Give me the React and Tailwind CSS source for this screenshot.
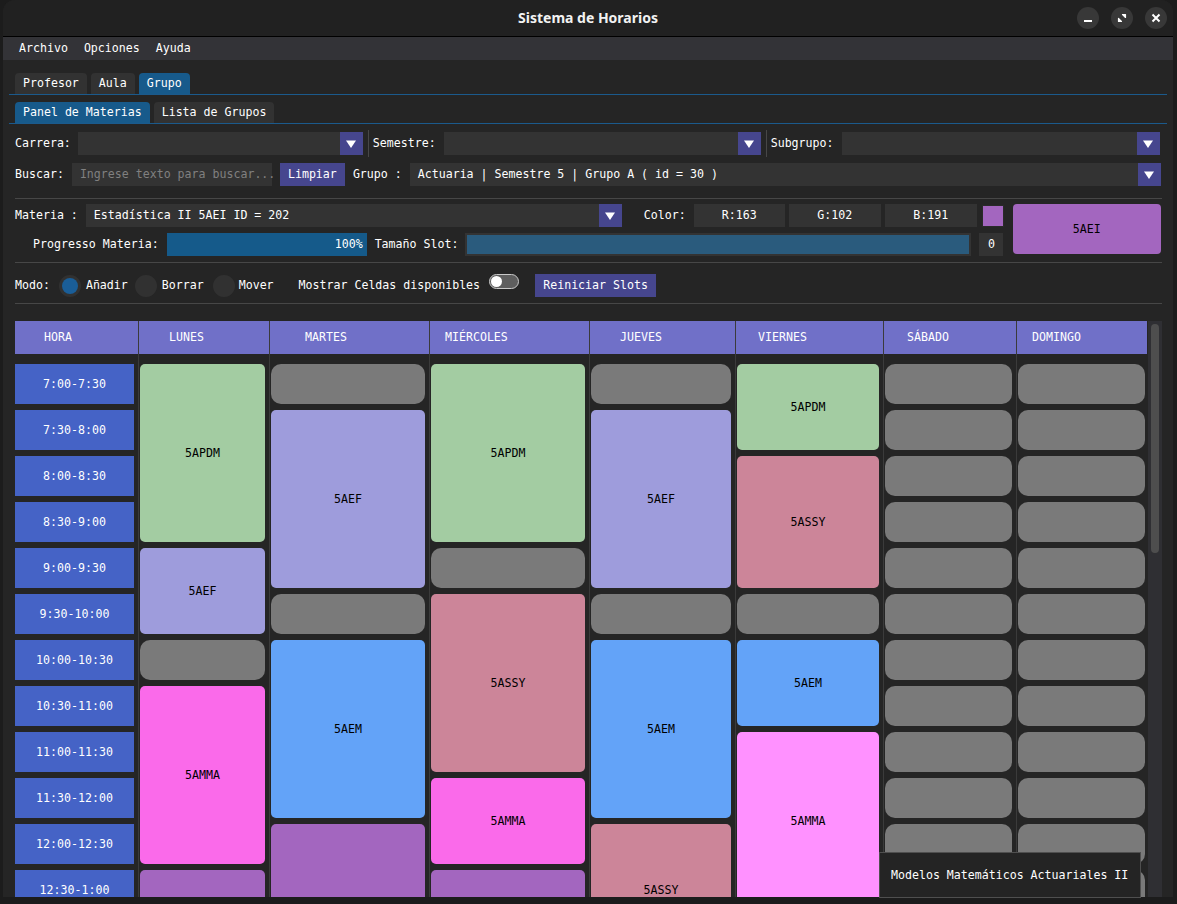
import React from 'react';

const mono = "font-['DejaVu_Sans_Mono',monospace] text-[11.6px] leading-[13px]";

const tint = {
  apdm: 'bg-[#a3cca2]',
  aef: 'bg-[#9e9cdc]',
  aem: 'bg-[#63a3f8]',
  assy: 'bg-[#cc8599]',
  amma: 'bg-[#fa6aea]',
  ammaHover: 'bg-[#ff91ff]',
  mor: 'bg-[#a366bf]',
};

const spanH = { 1: 'h-[40px]', 2: 'h-[86px]', 3: 'h-[132px]', 4: 'h-[178px]' };

const horas = [
  '7:00-7:30', '7:30-8:00', '8:00-8:30', '8:30-9:00', '9:00-9:30', '9:30-10:00',
  '10:00-10:30', '10:30-11:00', '11:00-11:30', '11:30-12:00', '12:00-12:30', '12:30-1:00',
];

const libre = (n) => Array.from({ length: n }, () => [null, 1]);

const dias = [
  { name: 'LUNES', w: 'w-[131px]', pl: 'pl-[30px]', pr: 'pr-[4px]',
    cells: [['5APDM', 4, 'apdm'], ['5AEF', 2, 'aef'], [null, 1], ['5AMMA', 4, 'amma'], ['', 2, 'mor']] },
  { name: 'MARTES', w: 'w-[160px]', pl: 'pl-[35px]', pr: 'pr-[4px]',
    cells: [[null, 1], ['5AEF', 4, 'aef'], [null, 1], ['5AEM', 4, 'aem'], ['', 3, 'mor']] },
  { name: 'MIÉRCOLES', w: 'w-[160px]', pl: 'pl-[15px]', pr: 'pr-[4px]',
    cells: [['5APDM', 4, 'apdm'], [null, 1], ['5ASSY', 4, 'assy'], ['5AMMA', 2, 'amma'], ['', 2, 'mor']] },
  { name: 'JUEVES', w: 'w-[146px]', pl: 'pl-[30px]', pr: 'pr-[4px]',
    cells: [[null, 1], ['5AEF', 4, 'aef'], [null, 1], ['5AEM', 4, 'aem'], ['5ASSY', 3, 'assy']] },
  { name: 'VIERNES', w: 'w-[148px]', pl: 'pl-[22px]', pr: 'pr-[4px]',
    cells: [['5APDM', 2, 'apdm'], ['5ASSY', 3, 'assy'], [null, 1], ['5AEM', 2, 'aem'], ['5AMMA', 4, 'ammaHover']] },
  { name: 'SÁBADO', w: 'w-[133px]', pl: 'pl-[23px]', pr: 'pr-[4px]', cells: libre(12) },
  { name: 'DOMINGO', w: 'w-[131px]', pl: 'pl-[15px]', pr: 'pr-[2px]', cells: libre(12) },
];

function Arrow() {
  return (
    <div className="flex h-full w-[23px] shrink-0 items-center justify-center bg-[#46468e]">
      <svg width="10" height="8" viewBox="0 0 10 8"><path d="M0 0.5h10L5 8z" fill="#fff" /></svg>
    </div>
  );
}

function Combo({ w, text }) {
  return (
    <div className={`flex h-[23px] ${w} shrink-0 bg-[#333333]`}>
      <div className="flex flex-1 items-center px-[8px] whitespace-nowrap">{text}</div>
      <Arrow />
    </div>
  );
}

function Tab({ active, children }) {
  return (
    <div className={`flex h-[21px] items-center rounded-t-[4px] px-[8px] ${active ? 'bg-[#175a8b]' : 'bg-[#323232]'}`}>
      {children}
    </div>
  );
}

function Radio({ on, className }) {
  return (
    <div className={`flex h-[22px] w-[22px] shrink-0 items-center justify-center rounded-full bg-[#313131] ${className}`}>
      {on && <div className="h-[16px] w-[16px] rounded-full bg-[#1a5e98]" />}
    </div>
  );
}

function Cell({ label, span, kind }) {
  if (!kind) return <div className="h-[40px] shrink-0 rounded-[10px] bg-[#7a7a7a]" />;
  return (
    <div className={`flex ${spanH[span]} shrink-0 items-center justify-center rounded-[5px] text-black ${tint[kind]}`}>
      {label}
    </div>
  );
}

function TitleButton({ children }) {
  return (
    <div className="flex h-[22px] w-[22px] items-center justify-center rounded-full bg-[#383838]">
      <svg width="22" height="22" viewBox="0 0 22 22">{children}</svg>
    </div>
  );
}

export default function App() {
  return (
    <div className={`relative h-[904px] w-[1177px] overflow-hidden bg-[#1c1c1c] text-white ${mono}`}>
      <div className="ml-[3px] flex h-[897px] w-[1170px] flex-col overflow-hidden rounded-t-[12px] bg-[#252525]">
        {/* title bar */}
        <div className="grid h-[37px] shrink-0 grid-cols-[1fr_auto_1fr] items-center border-b border-black bg-[#212121]">
          <div />
          <div className="font-['Noto_Sans',sans-serif] text-[14px] font-bold leading-none text-[#f2f2f2]">Sistema de Horarios</div>
          <div className="flex justify-end gap-[12px] pr-[6px]">
            <TitleButton><rect x="7" y="13" width="8" height="2" fill="#fff" /></TitleButton>
            <TitleButton>
              <path d="M11.5 7.5h3v3z M7.5 11.5v3h3z" fill="#fff" stroke="#fff" strokeWidth="1.2" strokeLinejoin="round" />
            </TitleButton>
            <TitleButton><path d="M7.5 7.5l7 7M14.5 7.5l-7 7" stroke="#fff" strokeWidth="2" /></TitleButton>
          </div>
        </div>

        {/* menu */}
        <div className="flex h-[23px] shrink-0 items-center gap-[16px] bg-[#333337] pl-[16px]">
          <span>Archivo</span>
          <span>Opciones</span>
          <span>Ayuda</span>
        </div>

        {/* body */}
        <div className="flex flex-1 flex-col pl-[12px] pr-[11px] pt-[13px]">
          <div className="-ml-[6px] -mr-[5px] flex gap-[4px] border-b border-[#1b5a8c] pl-[6px]">
            <Tab>Profesor</Tab>
            <Tab>Aula</Tab>
            <Tab active>Grupo</Tab>
          </div>
          <div className="-ml-[6px] -mr-[5px] mt-[7px] flex gap-[4px] border-b border-[#1b5a8c] pl-[6px]">
            <Tab active>Panel de Materias</Tab>
            <Tab>Lista de Grupos</Tab>
          </div>

          {/* fila 1 */}
          <div className="mt-[8px] flex h-[23px] items-center">
            <span>Carrera:</span>
            <div className="ml-[7px]"><Combo w="w-[285px]" text="" /></div>
            <div className="ml-[5px] h-[27px] w-px bg-[#474747]" />
            <span className="ml-[4px]">Semestre:</span>
            <div className="ml-[8px]"><Combo w="w-[317px]" text="" /></div>
            <div className="ml-[5px] h-[27px] w-px bg-[#474747]" />
            <span className="ml-[4px]">Subgrupo:</span>
            <div className="ml-[8px]"><Combo w="w-[318px]" text="" /></div>
          </div>

          {/* fila 2 */}
          <div className="mt-[8px] flex h-[23px] items-center">
            <span>Buscar:</span>
            <div className="ml-[8px] flex h-[23px] w-[200px] items-center bg-[#333333] px-[8px] text-[#808080] whitespace-nowrap">
              Ingrese texto para buscar...
            </div>
            <div className="ml-[8px] flex h-[23px] w-[65px] items-center justify-center bg-[#46468e]">Limpiar</div>
            <span className="ml-[8px]">Grupo :</span>
            <div className="ml-[8px]"><Combo w="w-[751px]" text="Actuaria | Semestre 5 | Grupo A ( id = 30 )" /></div>
          </div>

          <div className="mt-[12px] h-px bg-[#474747]" />

          {/* materia */}
          <div className="mt-[5px] flex">
            <div className="flex flex-col">
              <div className="flex h-[23px] items-center">
                <span className="whitespace-pre">Materia :</span>
                <div className="ml-[8px]"><Combo w="w-[536px]" text="Estadística II 5AEI ID = 202" /></div>
                <span className="ml-[22px]">Color:</span>
                <div className="ml-[8px] flex h-[23px] w-[91px] items-center justify-center bg-[#333333]">R:163</div>
                <div className="ml-[4px] flex h-[23px] w-[92px] items-center justify-center bg-[#333333]">G:102</div>
                <div className="ml-[4px] flex h-[23px] w-[92px] items-center justify-center bg-[#333333]">B:191</div>
                <div className="ml-[5px] h-[22px] w-[22px] border border-[#2a2a2a] bg-[#a366bf]" />
              </div>
              <div className="mt-[6px] flex h-[23px] items-center pl-[18px]">
                <span>Progresso Materia:</span>
                <div className="ml-[8px] flex h-[23px] w-[200px] items-center justify-end bg-[#155a8a] pr-[4px]">100%</div>
                <span className="ml-[8px]">Tamaño Slot:</span>
                <div className="ml-[7px] flex h-[23px] w-[506px] bg-[#333333] py-[2px] pl-[2px] pr-[2px]">
                  <div className="flex-1 bg-[#2a5b7d]" />
                </div>
                <div className="ml-[8px] flex h-[23px] w-[24px] items-center justify-center bg-[#333333]">0</div>
              </div>
            </div>
            <div className="ml-[9px] flex h-[50px] w-[148px] items-center justify-center rounded-[4px] bg-[#a366bf] text-black">
              5AEI
            </div>
          </div>

          <div className="mt-[6px] h-px bg-[#474747]" />

          {/* modo */}
          <div className="mt-[11px] flex h-[23px] items-center">
            <span>Modo:</span>
            <Radio on className="ml-[9px]" />
            <span className="ml-[5px]">Añadir</span>
            <Radio className="ml-[7px]" />
            <span className="ml-[5px]">Borrar</span>
            <Radio className="ml-[9px]" />
            <span className="ml-[4px]">Mover</span>
            <span className="ml-[25px]">Mostrar Celdas disponibles</span>
            <div className="ml-[9px] flex h-[15px] w-[30px] items-center self-start rounded-full border border-[#c8c8c8] bg-[#5e5e5e]">
              <div className="ml-[1px] h-[11px] w-[11px] rounded-full bg-white" />
            </div>
            <div className="ml-[16px] flex h-[23px] w-[121px] items-center justify-center bg-[#46468e]">Reiniciar Slots</div>
          </div>

          <div className="mt-[6px] h-px bg-[#474747]" />

          {/* tabla */}
          <div className="mt-[17px] flex h-[576px] overflow-hidden">
            <div className="flex w-[1132px] shrink-0">
              <div className="flex w-[123px] shrink-0 flex-col">
                <div className="flex h-[33px] shrink-0 items-center bg-[#7070c8] pl-[29px]">HORA</div>
                <div className="flex flex-col gap-[6px] pr-[4px] pt-[10px]">
                  {horas.map((h) => (
                    <div key={h} className="flex h-[40px] shrink-0 items-center justify-center bg-[#4563c6]">{h}</div>
                  ))}
                </div>
              </div>
              {dias.map((d) => (
                <div key={d.name} className={`flex ${d.w} shrink-0 flex-col border-l border-[#3b3b3b]`}>
                  <div className={`flex h-[33px] shrink-0 items-center bg-[#7070c8] ${d.pl}`}>{d.name}</div>
                  <div className={`flex flex-col gap-[6px] pl-[1px] ${d.pr} pt-[10px]`}>
                    {d.cells.map(([label, span, kind], i) => (
                      <Cell key={i} label={label} span={span} kind={kind} />
                    ))}
                  </div>
                </div>
              ))}
            </div>
            <div className="ml-px w-[14px] shrink-0 bg-[#2f2f33] pl-[3px] pt-[3px]">
              <div className="h-[229px] w-[8px] rounded-full bg-[#4e4e4e]" />
            </div>
          </div>
        </div>
      </div>

      {/* tooltip */}
      <div className="absolute left-[879px] top-[852px] flex h-[46px] w-[262px] items-center border border-[#4f4f4f] bg-[#242424] pl-[11px]">
        Modelos Matemáticos Actuariales II
      </div>
    </div>
  );
}
